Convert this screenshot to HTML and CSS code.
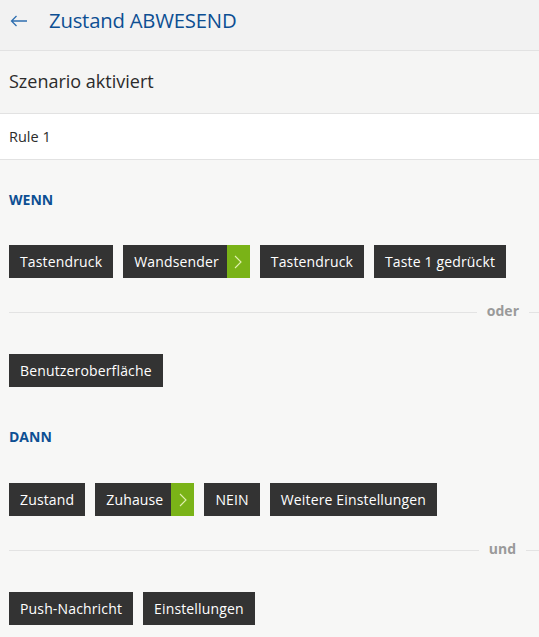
FILE: index.html
```html
<!DOCTYPE html>
<html lang="de">
<head>
<meta charset="utf-8">
<title>Zustand ABWESEND</title>
<link rel="stylesheet" href="styles.css">
</head>
<body>
<header class="topbar">
  <svg class="back" width="18" height="12" viewBox="0 0 18 12"><path d="M6.5 1 L1.5 6 L6.5 11 M1.5 6 H17" fill="none" stroke="#2f6fb0" stroke-width="1.3"/></svg>
  <h1 class="title">Zustand ABWESEND</h1>
</header>
<section class="scenario">Szenario aktiviert</section>
<section class="rule">Rule 1</section>
<main class="content">
  <h2 class="label wenn">WENN</h2>
  <div class="chips">
    <span class="chip">Tastendruck</span>
    <span class="chip split"><span class="txt">Wandsender</span><span class="go"><svg width="8" height="14" viewBox="0 0 8 14"><path d="M1 1 L7 7 L1 13" fill="none" stroke="#e2f0b0" stroke-width="1.1"/></svg></span></span>
    <span class="chip">Tastendruck</span>
    <span class="chip">Taste 1 gedrückt</span>
  </div>
  <div class="divider"><span>oder</span></div>
  <div class="chips">
    <span class="chip">Benutzeroberfläche</span>
  </div>
  <h2 class="label dann">DANN</h2>
  <div class="chips">
    <span class="chip">Zustand</span>
    <span class="chip split"><span class="txt">Zuhause</span><span class="go"><svg width="8" height="14" viewBox="0 0 8 14"><path d="M1 1 L7 7 L1 13" fill="none" stroke="#e2f0b0" stroke-width="1.1"/></svg></span></span>
    <span class="chip">NEIN</span>
    <span class="chip">Weitere Einstellungen</span>
  </div>
  <div class="divider"><span class="und">und</span></div>
  <div class="chips">
    <span class="chip">Push-Nachricht</span>
    <span class="chip">Einstellungen</span>
  </div>
</main>
</body>
</html>
```
FILE: styles.css
```css
* { box-sizing: border-box; }
html, body { margin: 0; padding: 0; }
body {
  background: #f7f7f6;
  font-family: "Open Sans", "Noto Sans", sans-serif;
  color: #2b2b2b;
  width: 539px;
}
.topbar {
  height: 51px;
  background: #f2f2f2;
  border-bottom: 1px solid #e2e2e2;
  display: flex;
  align-items: center;
  padding: 0 0 10px 10px;
}
.back { margin-right: 21px; margin-top: 1px; }
.title {
  margin: 0;
  font-weight: 400;
  font-size: 20.3px;
  color: #0d4f93;
  letter-spacing: -0.2px;
}
.scenario {
  height: 63px;
  background: #f5f5f4;
  border-bottom: 1px solid #e2e2e2;
  display: flex;
  align-items: center;
  padding: 0 0 2px 9px;
  font-size: 18px;
  color: #2b2b2b;
}
.rule {
  height: 46px;
  background: #ffffff;
  border-bottom: 1px solid #e2e2e2;
  display: flex;
  align-items: center;
  padding: 0 0 0 9px;
  font-size: 14.5px;
  color: #2b2b2b;
}
.content { padding: 0 0 0 9px; }
.label {
  margin: 0;
  font-size: 14px;
  font-weight: 700;
  color: #0d4f93;
  line-height: 20px;
}
.wenn { padding-top: 30px; }
.dann { padding-top: 40px; }
.chips {
  display: flex;
  gap: 10px;
}
.wenn + .chips { margin-top: 35px; }
.dann + .chips { margin-top: 36px; }
.divider + .chips { margin-top: 41px; }
.chip {
  display: inline-flex;
  align-items: center;
  height: 33px;
  background: #333333;
  color: #ffffff;
  font-size: 14px;
  padding: 0 11px;
  letter-spacing: 0.15px;
}
.chip.split { padding: 0 0 0 11px; }
.chip.split .txt { margin-right: 8px; }
.go {
  width: 23px;
  height: 33px;
  background: #7ab317;
  display: flex;
  align-items: center;
  justify-content: center;
}
.divider {
  position: relative;
  height: 1px;
  background: #e3e3e3;
  margin: 34px 0 0 0;
}
.divider span {
  position: absolute;
  right: 10px;
  top: -11px;
  background: #f7f7f6;
  padding: 0 10px;
  font-size: 14px;
  font-weight: 700;
  color: #9a9a9a;
  line-height: 20px;
}
.divider span.und { right: 13px; }
```
